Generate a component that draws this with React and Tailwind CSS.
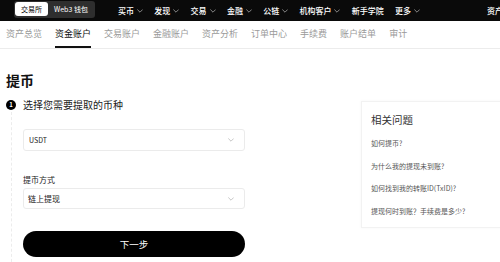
import React from "react";

const Chev = ({ className = "" }) => (
  <svg viewBox="0 0 10 6" className={className} fill="none" stroke="currentColor" strokeWidth="1.3" strokeLinecap="round" strokeLinejoin="round">
    <path d="M1 1l4 4 4-4" />
  </svg>
);

const navItems = [
  { t: "买币", c: true },
  { t: "发现", c: true },
  { t: "交易", c: true },
  { t: "金融", c: true },
  { t: "公链", c: true },
  { t: "机构客户", c: true },
  { t: "新手学院", c: false },
  { t: "更多", c: true },
];

const tabs = ["资产总览", "资金账户", "交易账户", "金融账户", "资产分析", "订单中心", "手续费", "账户结单", "审计"];

const faqs = ["如何提币?", "为什么我的提现未到账?", "如何找到我的转账ID(TxID)?", "提现何时到账？手续费是多少?"];

export default function App() {
  return (
    <div className="w-[500px] h-[262px] overflow-hidden bg-white font-['Noto_Sans_CJK_SC','Noto_Sans',sans-serif] text-[#111]">
      {/* top bar */}
      <div className="h-[21px] bg-[#0a0a0a] flex items-center whitespace-nowrap">
        <div className="ml-[14px] mb-[3px] flex h-[17px] items-start rounded-[3px] bg-[#2e2e2e] p-[1px]">
          <div className="h-[14px] w-[33px] rounded-[3px] bg-white text-[7px] leading-[14px] text-black text-center">交易所</div>
          <div className="h-[14px] w-[46px] text-[7px] leading-[14px] text-white text-center">Web3 钱包</div>
        </div>
        <div className="ml-[11px] h-[13px] w-px bg-[#3a3a3a]" />
        <div className="ml-[12px] flex items-center gap-[11.3px]">
          {navItems.map((n) => (
            <div key={n.t} className="flex items-center gap-[3px] text-[8px] font-medium text-white">
              <span>{n.t}</span>
              {n.c && <Chev className="w-[6px] h-[4px] text-[#aaa]" />}
            </div>
          ))}
        </div>
        <div className="ml-[67px] text-[8px] font-medium text-white">资产管理</div>
      </div>

      {/* tabs */}
      <div className="h-[28px] border-b border-[#ececec] flex items-stretch gap-[13px] pl-[6px] whitespace-nowrap">
        {tabs.map((t, i) => (
          <div
            key={t}
            className={
              "flex items-center text-[9px] border-b-2 " +
              (i === 1 ? "border-[#111] text-[#111]" : "border-transparent text-[#9a9a9a]")
            }
          >
            {t}
          </div>
        ))}
      </div>

      {/* content */}
      <div className="flex">
        <div className="w-[239px] ml-[6px] shrink-0">
          <div className="mt-[21px] text-[14px] leading-[20px] font-bold">提币</div>
          <div className="mt-[8px] flex items-center h-[14px]">
            <div className="w-[10px] h-[10px] rounded-full bg-black text-white text-[6px] leading-[10px] text-center font-bold">1</div>
            <div className="ml-[7px] text-[10px] leading-[14px] text-[#222]">选择您需要提取的币种</div>
          </div>
          <div className="ml-[5px] border-l border-dashed border-[#ececec] pl-[11px] pt-[17px] pb-[10px]">
            <div className="h-[22px] w-[222px] rounded-[3px] border border-[#ebebeb] flex items-center justify-between px-[5px]">
              <span className="text-[7px] text-[#222]">USDT</span>
              <Chev className="w-[6px] h-[4px] text-[#b5b5b5] mr-[5px]" />
            </div>
            <div className="mt-[23px] text-[8px] leading-[11px] text-[#222]">提币方式</div>
            <div className="mt-[3px] h-[21px] w-[222px] rounded-[3px] border border-[#ebebeb] flex items-center justify-between px-[4px]">
              <span className="text-[8px] text-[#222]">链上提现</span>
              <Chev className="w-[6px] h-[4px] text-[#b5b5b5] mr-[6px]" />
            </div>
            <div className="mt-[22px] h-[26px] w-[222px] rounded-full bg-black flex items-center justify-center text-[9.5px] text-white">
              下一步
            </div>
          </div>
        </div>

        <div className="ml-[116px] mt-[52px] w-[160px] shrink-0 self-start border border-[#f2f2f2] shadow-[0_0_3px_rgba(0,0,0,0.04)] pl-[9px] pt-[10px] pb-[11px]">
          <div className="text-[10.5px] leading-[16px] text-[#333]">相关问题</div>
          <div className="mt-[10px] flex flex-col gap-[12.5px]">
            {faqs.map((f) => (
              <div key={f} className="text-[7px] leading-[10px] text-[#555] whitespace-nowrap">{f}</div>
            ))}
          </div>
        </div>
      </div>
    </div>
  );
}
